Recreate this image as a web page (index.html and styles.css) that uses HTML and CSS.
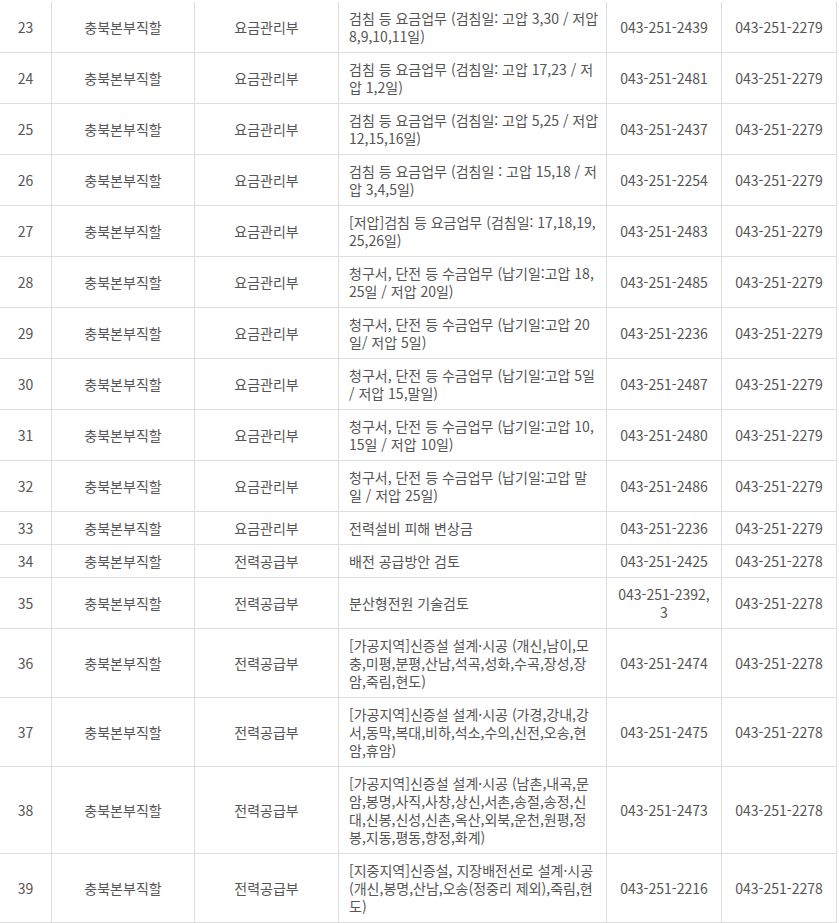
FILE: index.html
```html
<!DOCTYPE html>
<html lang="ko">
<head>
<meta charset="utf-8">
<title>충북본부직할 업무 연락처</title>
<link rel="stylesheet" href="styles.css">
</head>
<body>
<div class="wrap">
<table class="dir">
<colgroup>
<col class="c-no"><col class="c-org"><col class="c-dept"><col class="c-task"><col class="c-tel"><col class="c-fax">
</colgroup>
<tbody>
<tr><td>23</td><td>충북본부직할</td><td>요금관리부</td><td class="task">검침 등 요금업무 (검침일: 고압 3,30 / 저압 8,9,10,11일)</td><td>043-251-2439</td><td>043-251-2279</td></tr>
<tr><td>24</td><td>충북본부직할</td><td>요금관리부</td><td class="task">검침 등 요금업무 (검침일: 고압 17,23 / 저압 1,2일)</td><td>043-251-2481</td><td>043-251-2279</td></tr>
<tr><td>25</td><td>충북본부직할</td><td>요금관리부</td><td class="task">검침 등 요금업무 (검침일: 고압 5,25 / 저압 12,15,16일)</td><td>043-251-2437</td><td>043-251-2279</td></tr>
<tr><td>26</td><td>충북본부직할</td><td>요금관리부</td><td class="task">검침 등 요금업무 (검침일 : 고압 15,18 / 저압 3,4,5일)</td><td>043-251-2254</td><td>043-251-2279</td></tr>
<tr><td>27</td><td>충북본부직할</td><td>요금관리부</td><td class="task">[저압]검침 등 요금업무 (검침일: 17,18,19, 25,26일)</td><td>043-251-2483</td><td>043-251-2279</td></tr>
<tr><td>28</td><td>충북본부직할</td><td>요금관리부</td><td class="task">청구서, 단전 등 수금업무 (납기일:고압 18, 25일 / 저압 20일)</td><td>043-251-2485</td><td>043-251-2279</td></tr>
<tr><td>29</td><td>충북본부직할</td><td>요금관리부</td><td class="task">청구서, 단전 등 수금업무 (납기일:고압 20일/ 저압 5일)</td><td>043-251-2236</td><td>043-251-2279</td></tr>
<tr><td>30</td><td>충북본부직할</td><td>요금관리부</td><td class="task">청구서, 단전 등 수금업무 (납기일:고압 5일 / 저압 15,말일)</td><td>043-251-2487</td><td>043-251-2279</td></tr>
<tr><td>31</td><td>충북본부직할</td><td>요금관리부</td><td class="task">청구서, 단전 등 수금업무 (납기일:고압 10, 15일 / 저압 10일)</td><td>043-251-2480</td><td>043-251-2279</td></tr>
<tr><td>32</td><td>충북본부직할</td><td>요금관리부</td><td class="task">청구서, 단전 등 수금업무 (납기일:고압 말일 / 저압 25일)</td><td>043-251-2486</td><td>043-251-2279</td></tr>
<tr><td>33</td><td>충북본부직할</td><td>요금관리부</td><td class="task">전력설비 피해 변상금</td><td>043-251-2236</td><td>043-251-2279</td></tr>
<tr><td>34</td><td>충북본부직할</td><td>전력공급부</td><td class="task">배전 공급방안 검토</td><td>043-251-2425</td><td>043-251-2278</td></tr>
<tr><td>35</td><td>충북본부직할</td><td>전력공급부</td><td class="task">분산형전원 기술검토</td><td>043-251-2392, 3</td><td>043-251-2278</td></tr>
<tr><td>36</td><td>충북본부직할</td><td>전력공급부</td><td class="task">[가공지역]신증설 설계·시공 (개신,남이,모충,미평,분평,산남,석곡,성화,수곡,장성,장암,죽림,현도)</td><td>043-251-2474</td><td>043-251-2278</td></tr>
<tr><td>37</td><td>충북본부직할</td><td>전력공급부</td><td class="task">[가공지역]신증설 설계·시공 (가경,강내,강서,동막,복대,비하,석소,수의,신전,오송,현암,휴암)</td><td>043-251-2475</td><td>043-251-2278</td></tr>
<tr><td>38</td><td>충북본부직할</td><td>전력공급부</td><td class="task">[가공지역]신증설 설계·시공 (남촌,내곡,문암,봉명,사직,사창,상신,서촌,송절,송정,신대,신봉,신성,신촌,옥산,외북,운천,원평,정봉,지동,평동,향정,화계)</td><td>043-251-2473</td><td>043-251-2278</td></tr>
<tr><td>39</td><td>충북본부직할</td><td>전력공급부</td><td class="task">[지중지역]신증설, 지장배전선로 설계·시공 (개신,봉명,산남,오송(정중리 제외),죽림,현도)</td><td>043-251-2216</td><td>043-251-2278</td></tr>
</tbody>
</table>
</div>
</body>
</html>
```

FILE: styles.css
```css
html, body {
  margin: 0;
  padding: 0;
  background: #ffffff;
}

.wrap {
  padding-top: 2px;
}

.dir {
  table-layout: fixed;
  border-collapse: separate;
  border-spacing: 0;
  width: 837px;
  font-family: "Noto Sans CJK KR", "Noto Sans", sans-serif;
  font-size: 14px;
  line-height: 18px;
  color: #555555;
}

.c-no { width: 52px; }
.c-org { width: 143px; }
.c-dept { width: 144px; }
.c-task { width: 268px; }
.c-tel { width: 115px; }
.c-fax { width: 115px; }

.dir td {
  padding: 7px 10px;
  border-right: 1px solid #dddddd;
  border-bottom: 1px solid #dddddd;
  text-align: center;
  vertical-align: middle;
  word-break: keep-all;
  overflow-wrap: break-word;
}

.dir td.task {
  padding: 7px 6px 7px 10px;
  text-align: left;
  word-break: normal;
}
```
